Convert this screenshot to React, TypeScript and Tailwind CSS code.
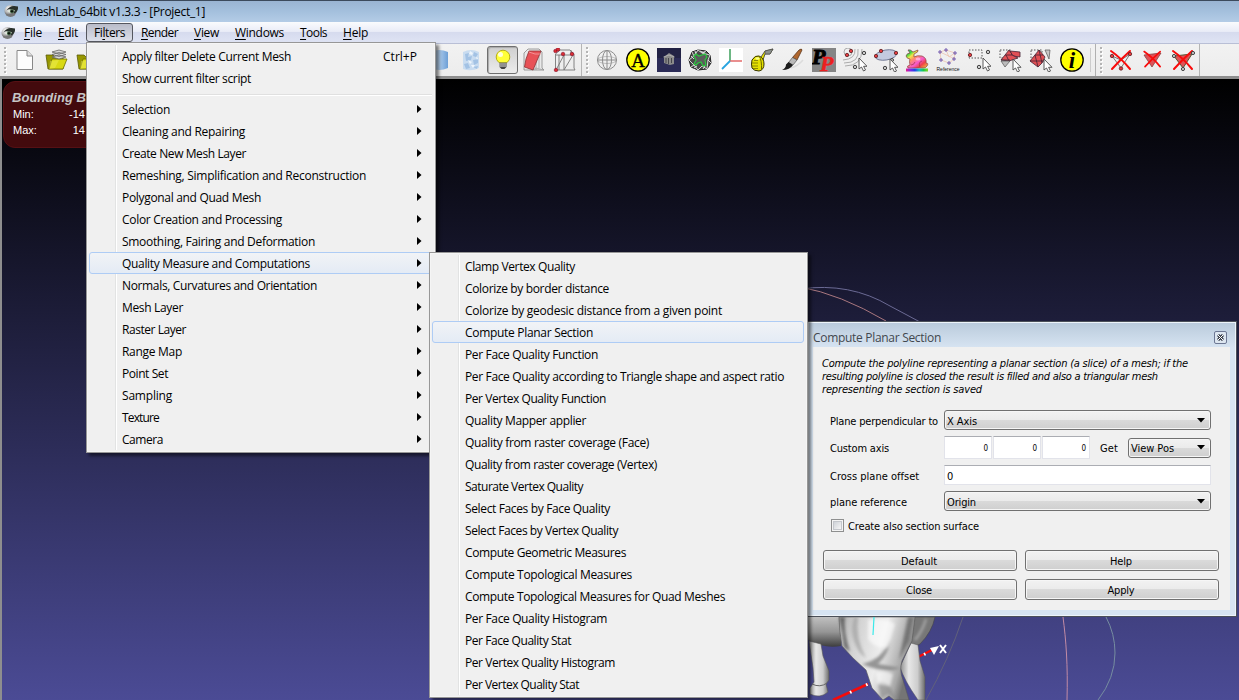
import { useLayoutEffect, useRef, useState, type ReactNode } from 'react';

/** Text set to a given line width by tracking. */
function Fit({ w, children }: { w: number; children: ReactNode }) {
  const ref = useRef<HTMLSpanElement>(null);
  const [ls, setLs] = useState(0);
  useLayoutEffect(() => {
    const el = ref.current;
    if (!el) return;
    const n = el.textContent?.length || 1;
    setLs((w - el.getBoundingClientRect().width) / n);
  }, [w]);
  return (
    <span ref={ref} className="inline-block shrink-0 whitespace-pre" style={{ letterSpacing: ls }}>
      {children}
    </span>
  );
}

const filters: [string, number][] = [
  ['Selection', 48],
  ['Cleaning and Repairing', 123],
  ['Create New Mesh Layer', 124],
  ['Remeshing, Simplification and Reconstruction', 244],
  ['Polygonal and Quad Mesh', 139],
  ['Color Creation and Processing', 160],
  ['Smoothing, Fairing and Deformation', 193],
  ['Quality Measure and Computations', 188],
  ['Normals, Curvatures and Orientation', 195],
  ['Mesh Layer', 61],
  ['Raster Layer', 64],
  ['Range Map', 60],
  ['Point Set', 46],
  ['Sampling', 50],
  ['Texture', 37],
  ['Camera', 41],
];

const quality: [string, number][] = [
  ['Clamp Vertex Quality', 110],
  ['Colorize by border distance', 144],
  ['Colorize by geodesic distance from a given point', 257],
  ['Compute Planar Section', 128],
  ['Per Face Quality Function', 133],
  ['Per Face Quality according to Triangle shape and aspect ratio', 319],
  ['Per Vertex Quality Function', 141],
  ['Quality Mapper applier', 121],
  ['Quality from raster coverage (Face)', 184],
  ['Quality from raster coverage (Vertex)', 192],
  ['Saturate Vertex Quality', 118],
  ['Select Faces by Face Quality', 145],
  ['Select Faces by Vertex Quality', 153],
  ['Compute Geometric Measures', 161],
  ['Compute Topological Measures', 167],
  ['Compute Topological Measures for Quad Meshes', 260],
  ['Per Face Quality Histogram', 142],
  ['Per Face Quality Stat', 106],
  ['Per Vertex Quality Histogram', 150],
  ['Per Vertex Quality Stat', 114],
];

const HOT =
  'rounded-[3px] border border-[#aeccf5] bg-[linear-gradient(#f1f3f6,#e4ebf5)]';

function Item({ label, w, arrow, hot, keys }: { label: string; w: number; arrow?: boolean; hot?: boolean; keys?: string }) {
  return (
    <div className={'relative flex h-[22px] shrink-0 items-center justify-between ' + (hot ? HOT + ' pl-[32px] pr-[9px]' : 'pl-[33px] pr-[10px]')}>
      <span className="pt-[2px]">
        <Fit w={w}>{label}</Fit>
      </span>
      {keys && (
        <span className="pr-[5px] pt-[2px]">
          <Fit w={34}>{keys}</Fit>
        </span>
      )}
      {arrow && (
        <svg width="5" height="8" viewBox="0 0 5 8" className="mb-[1px]">
          <path d="M0 0 L4.5 4 L0 8Z" fill="#000" />
        </svg>
      )}
    </div>
  );
}

function Eye() {
  return (
    <svg width="15" height="15" viewBox="0 0 15 15">
      <defs>
        <radialGradient id="eye" cx=".35" cy=".3">
          <stop offset="0" stopColor="#fff" />
          <stop offset=".7" stopColor="#b5b5b5" />
          <stop offset="1" stopColor="#777" />
        </radialGradient>
      </defs>
      <ellipse cx="6.500" cy="8" rx="6" ry="6" fill="url(#eye)" />
      <path d="M2.500 7.500Q6 1.500 14 3.500Q14.500 8 10.500 10.500L9 8Q6 5 2.500 7.500Z" fill="#29302b" />
      <path d="M3.500 8.500Q7 5 11 7.500Q9 11.500 3.500 8.500Z" fill="#dbe5d8" />
      <circle cx="8" cy="8.200" r="2" fill="#38573a" />
      <circle cx="8" cy="8.200" r=".9" fill="#000" />
    </svg>
  );
}

function Ico({ children, on }: { children: ReactNode; on?: boolean }) {
  return (
    <div className={'flex h-[28px] w-[31px] shrink-0 items-center justify-center ' + (on ? 'rounded-[3px] border border-[#6f6f6f] bg-[linear-gradient(#cfcfcf,#ececec)] shadow-[inset_1px_1px_1px_#a8a8a8]' : '')}>
      <svg width="24" height="24" viewBox="0 0 24 24" className="shrink-0">
        {children}
      </svg>
    </div>
  );
}

const Handle = () => (
  <svg width="3" height="28" className="shrink-0">
    {[1, 5, 9, 13, 17, 21, 25].map((y) => (
      <g key={y}>
        <rect x="1" y={y + 1} width="2" height="2" fill="#fff" />
        <rect x="0" y={y} width="2" height="2" fill="#b4b4b4" />
      </g>
    ))}
  </svg>
);

const Cursor = ({ x, y }: { x: number; y: number }) => (
  <path transform={`translate(${x} ${y})`} d="M0 0V11L2.5 9L4.5 13L6.5 12L4.6 8.3H8Z" fill="#fff" stroke="#4a4a4a" strokeWidth=".9" />
);

function Folder() {
  return (
    <>
      <path d="M2 7H9L11 9H19V21H4Z" fill="#979700" stroke="#5c5c08" strokeWidth=".8" />
      <path d="M5 21L8 11H23L19 21Z" fill="#d9d913" stroke="#6d6d00" strokeWidth=".8" />
      <path d="M6 13L15 12L11 20L5 21Z" fill="#f3f36a" opacity=".4" />
    </>
  );
}

const RED_DOT = { fill: '#e33b3f', stroke: '#5c2022', strokeWidth: 0.8 };
const GRY_DOT = { fill: '#ccc', stroke: '#444', strokeWidth: 1 };

function Cross() {
  return <path d="M2 3Q12 10 21 21M21 3Q12 11 3 21" stroke="#f90b0b" strokeWidth="2" fill="none" strokeLinecap="round" />;
}

function TitleBar() {
  return (
    <div className="flex h-[22px] items-center border-t border-[#3c4a5c] bg-[linear-gradient(#9ab4d2,#a4c0dd_50%,#b4cce6)] pl-[4px] text-[12px] text-black">
      <span className="-mt-[3px]">
        <Eye />
      </span>
      <span className="pl-[7px]">
        <Fit w={179}>MeshLab_64bit v1.3.3 - [Project_1]</Fit>
      </span>
    </div>
  );
}

const menus: [string, string, string, number][] = [
  ['', 'F', 'ile', 18],
  ['', 'E', 'dit', 20],
  ['Fi', 'l', 'ters', 31],
  ['', 'R', 'ender', 37],
  ['', 'V', 'iew', 25],
  ['', 'W', 'indows', 49],
  ['', 'T', 'ools', 27],
  ['', 'H', 'elp', 25],
];

function MenuBar() {
  return (
    <div className="flex h-[21px] items-center bg-[linear-gradient(#fafbfd,#e9ecf7_45%,#d6dbee_50%,#dfe4f4)]">
      <div className="w-[16px] pl-px">
        <Eye />
      </div>
      {menus.map(([a, u, b, w]) => (
        <div
          key={b}
          className={
            'flex h-[19px] items-center px-[7px] pt-px border ' +
            (a ? 'rounded-[3px] border-[#55575f] bg-[linear-gradient(#b9bcc9,#dde0ea)]' : 'border-transparent')
          }
        >
          <Fit w={w}>
            {a}
            <span className="underline underline-offset-2">{u}</span>
            {b}
          </Fit>
        </div>
      ))}
    </div>
  );
}

function ToolBar() {
  return (
    <div className="flex h-[36px] items-center border-t border-b-[3px] border-t-[#b9bfd6] border-b-[#8e8e8e] bg-[linear-gradient(#f2f2f2,#ececec)]">
      <div className="w-[9px] shrink-0 pl-[4px]">
        <Handle />
      </div>
      <Ico>
        <path d="M4 2.500H14L19.500 8V21.500H4Z" fill="#fdfdfd" stroke="#888" />
        <path d="M14 2.500V8H19.500" fill="#ddd" stroke="#888" />
      </Ico>
      <Ico>
        <Folder />
        <path d="M8 4L15 2L22 4L15 6ZM8 6.500L15 4.500L22 6.500L15 8.500ZM8 9L15 7L22 9L15 11Z" fill="#d9d9d9" stroke="#666" strokeWidth=".8" />
      </Ico>
      <Ico>
        <Folder />
      </Ico>
      <div className="w-[323px] shrink-0" />
      <Ico>
        <defs>
          <linearGradient id="cyl">
            <stop offset="0" stopColor="#e8f4ff" />
            <stop offset="1" stopColor="#6d9fd6" />
          </linearGradient>
        </defs>
        <path d="M2 4Q10 0 19 4V20Q10 24 2 20Z" fill="url(#cyl)" />
      </Ico>
      <Ico>
        <path d="M3 4Q11 0 19 4V20Q11 24 3 21Z" fill="#c9dcf0" />
        <path d="M5 6L9 5L8 9L12 8L11 12L6 13ZM14 4L18 6L16 9L13 8ZM13 12L18 11L18 15L14 17ZM4 16L8 15L10 20L6 21ZM13 19L18 18L17 21Z" fill="#a3c2e4" />
        <path d="M10 3L13 5L12 7L9 6ZM16 9L18 10L17 12ZM8 12L12 14L10 16ZM11 17L15 17L13 20Z" fill="#eef5fc" />
      </Ico>
      <Ico on>
        <circle cx="12" cy="9" r="6.800" fill="#ffff38" stroke="#a8a000" strokeWidth=".8" />
        <circle cx="9.500" cy="6.500" r="2.500" fill="#ffffd8" />
        <path d="M8.500 14.500H15.500V19L13.500 21H10.500L8.500 19Z" fill="#444" />
        <path d="M8.500 16H15M8.500 18H15" stroke="#ddd" />
      </Ico>
      <Ico>
        <path d="M2 5L6 1H17L20 4V20L22 22H2Z" fill="#e9e9e9" stroke="#888" strokeWidth=".8" />
        <path d="M14 8V22M11 22L14 20L22 22M17 4V20" stroke="#999" strokeWidth=".7" fill="none" />
        <path d="M7 3H19L11 22L2.500 19L4 11Z" fill="#e85257" stroke="#8f3033" strokeWidth=".8" />
        <path d="M7 4L13 6H19" stroke="#f4a3a5" strokeWidth=".8" fill="none" />
      </Ico>
      <Ico>
        <path d="M2.500 6L7 2H17L21 6V20L22 22H2.500ZM3 7H21M3 22L11 7V22L20 7M18 2V7M6 7V22" fill="none" stroke="#777" strokeWidth=".9" />
        {[[2.5, 3], [5, 1.5], [10, 6], [19, 6], [3, 22]].map(([x, y]) => (
          <circle key={x + '-' + y} cx={x} cy={y} r="1.800" fill="#d92c31" stroke="#702" strokeWidth=".5" />
        ))}
      </Ico>
      <div className="mx-px h-full w-px shrink-0 bg-[#b5b5b5]" />
      <div className="w-[8px] shrink-0 pl-[3px]">
        <Handle />
      </div>
      <Ico>
        <g fill="none" stroke="#8c8c8c">
          <circle cx="12" cy="12" r="9.500" />
          <ellipse cx="12" cy="12" rx="4.500" ry="9.500" />
          <path d="M2.500 12H21.500M12 2.500V21.500" />
          <ellipse cx="12" cy="12" rx="9.500" ry="3.500" strokeWidth=".5" />
        </g>
      </Ico>
      <Ico>
        <circle cx="12" cy="12" r="11.200" fill="#ffff00" stroke="#000" strokeWidth="1.300" />
        <text x="12" y="18.500" textAnchor="middle" fontFamily="Liberation Serif, serif" fontSize="19" fill="#000" stroke="#000" strokeWidth=".4">A</text>
      </Ico>
      <Ico>
        <rect width="24" height="24" fill="#2b2b56" />
        <rect width="24" height="10" fill="#1c1c38" opacity=".6" />
        <path d="M7 9L12 5L17 8V16L13 17L7 15Z" fill="#8a8a8a" />
        <path d="M9 10V15M11.500 10V16M14.500 10V15" stroke="#46464c" />
        <path d="M6.500 9L12 7L17.500 9" stroke="#b4b4b4" fill="none" strokeWidth=".9" />
      </Ico>
      <Ico>
        <path d="M4 4L10 2L18 3L22 7L23 15L19 21L10 22L3 19L1 12Z" fill="#4a4a4a" stroke="#222" />
        <path d="M1 12L6 8L10 2L14 5L22 7L20 12L23 15M3 19L6 17L10 22L14 18L19 21M4 4L6 8M1 12L6 17M18 3L14 5M20 12L19 21M7 3L8 6M12 3L17 5M3 8L6 11M6 20L9 18M15 21L17 18" stroke="#e6e6e6" strokeWidth=".9" fill="none" />
        <path d="M6 8L8 6L11 8L17 6L19 9L17 12L18 17L15 18L13 14L10 15L8 17L6 16L8 12Z" fill="#5c5c5c" stroke="#2cc93f" strokeWidth="1.200" />
      </Ico>
      <Ico>
        <rect width="24" height="24" fill="#fff" />
        <path d="M11 1V13" stroke="#3c9f5b" strokeWidth="1.500" />
        <path d="M11 13H23" stroke="#e36a6a" strokeWidth="1.500" />
        <path d="M11 13L3 21" stroke="#27a4e0" strokeWidth="1.800" />
      </Ico>
      <Ico>
        <path d="M11 9L15 3L23 1L20 6L15 6L13 12Z" fill="#e8e400" stroke="#333" strokeWidth=".8" />
        <path d="M15 3L23 1L20 6L15 6Z" fill="#8c918e" stroke="#444" strokeWidth=".6" />
        <path d="M2 12Q5 7 9 8Q14 10 14 16Q14 22 9 23Q4 23 2 20Q1 16 2 12Z" fill="#e5e000" stroke="#343200" />
        <path d="M9 8Q12 12 11.500 22" stroke="#6b6800" fill="none" />
        <path d="M2 15H8M2 18H8M3 20.500H8M4 12.500H8" stroke="#777300" strokeWidth=".8" />
        <ellipse cx="7.500" cy="10.500" rx="2" ry="1.200" fill="#fbff8a" />
      </Ico>
      <Ico>
        <path d="M10 20Q17 18 22 12" stroke="#dcdcdc" strokeWidth="1.500" fill="none" />
        <path d="M18 2Q21 0 21 2L16 12L11.500 9.500Z" fill="#b0672e" stroke="#5c3519" strokeWidth=".8" />
        <path d="M11.500 9.500L16 12L12 17L7.500 14.500Z" fill="#b9b9b9" stroke="#555" strokeWidth=".7" />
        <path d="M7.500 14L12 17Q9 22 1 22Q5 20 5 16.500Z" fill="#1b1b1b" />
      </Ico>
      <Ico>
        <rect width="24" height="24" fill="#858585" />
        <text x="0" y="16" fontFamily="Liberation Serif, serif" fontWeight="bold" fontStyle="italic" fontSize="22" fill="#000" stroke="#000">P</text>
        <text x="8" y="23" fontFamily="Liberation Serif, serif" fontWeight="bold" fontStyle="italic" fontSize="22" fill="#ec1f1f" stroke="#ec1f1f" strokeWidth=".5">P</text>
      </Ico>
      <Ico>
        <g fill="none" stroke="#9a9a9a" strokeWidth=".8">
          <circle cx="5" cy="4" r="4" />
          <path d="M12 1Q13 11 0 12M15 1Q17 15 1 15M19 1Q19 18 2 18" />
        </g>
        <circle cx="4" cy="7" r="1.700" {...RED_DOT} />
        <circle cx="8" cy="3" r="1.700" {...RED_DOT} />
        <circle cx="21" cy="5" r="1.700" {...GRY_DOT} />
        <circle cx="12" cy="19" r="1.700" {...GRY_DOT} />
        <Cursor x={16} y={10} />
      </Ico>
      <Ico>
        <ellipse cx="12" cy="7" rx="11" ry="5" transform="rotate(-10 12 7)" fill="#c3cadf" stroke="#606886" strokeWidth=".8" />
        <circle cx="2" cy="8" r="1.700" {...RED_DOT} />
        <circle cx="7" cy="3" r="1.700" {...RED_DOT} />
        <circle cx="22" cy="5" r="1.700" {...RED_DOT} />
        <circle cx="18" cy="12" r="1.500" {...GRY_DOT} />
        <circle cx="11" cy="20" r="1.700" {...GRY_DOT} />
        <Cursor x={16} y={11} />
      </Ico>
      <Ico>
        <defs>
          <linearGradient id="rb" gradientUnits="userSpaceOnUse" x1="5" y1="1" x2="21" y2="21">
            <stop offset="0" stopColor="#17c9a0" />
            <stop offset=".12" stopColor="#3fdc42" />
            <stop offset=".24" stopColor="#f0e64a" />
            <stop offset=".38" stopColor="#ff8c6a" />
            <stop offset=".6" stopColor="#f55bcc" />
            <stop offset=".76" stopColor="#ef3f4a" />
            <stop offset="1" stopColor="#ead23a" />
          </linearGradient>
          <linearGradient id="spec">
            <stop offset="0" stopColor="#e81c8c" />
            <stop offset=".2" stopColor="#7a28e8" />
            <stop offset=".4" stopColor="#2040e8" />
            <stop offset=".6" stopColor="#18b8c8" />
            <stop offset=".8" stopColor="#18c848" />
            <stop offset="1" stopColor="#88d820" />
          </linearGradient>
        </defs>
        <path d="M1 8Q2 5 5 5L3 2Q5 1 8 4L13 2Q14 4 9 6L9 9Q12 7 17 8Q22 10 21 15Q24 15 22 18Q21 20 18 20H3Q1 18 5 17Q4 13 5 11Q2 11 1 8Z" fill="url(#rb)" stroke="#8a4040" strokeWidth=".7" />
        <path d="M15 19Q13 14 17 13M6 17Q9 17 10 14" stroke="#a02c50" strokeWidth=".7" fill="none" />
        <ellipse cx="13" cy="11" rx="2.500" ry="1.500" fill="#ffc8f0" opacity=".7" />
        <rect x="1" y="20.500" width="22" height="3" fill="url(#spec)" />
      </Ico>
      <Ico>
        <path d="M4 4L10 2L19 5L18 11L13 15L5 12ZM4 4L19 11M10 2L13 9L19 5" stroke="#edc4ae" strokeWidth=".8" fill="none" />
        {[[4, 4], [10, 2], [19, 5], [18, 11], [13, 15], [5, 12]].map(([x, y]) => (
          <path key={x} d={`M${x - 2} ${y}h4M${x} ${y - 2}v4`} stroke="#7058b0" />
        ))}
        <text x="12" y="23" textAnchor="middle" fontFamily="Liberation Sans, sans-serif" fontSize="5" fill="#111" textLength="23">Reference</text>
      </Ico>
      <Ico>
        <path d="M2 2H15V10H2Z" fill="none" stroke="#555" strokeDasharray="1.500 1.500" />
        <circle cx="3" cy="7" r="1.700" {...RED_DOT} />
        <circle cx="21" cy="4" r="1.700" {...GRY_DOT} />
        <circle cx="12" cy="19" r="1.700" {...GRY_DOT} />
        <Cursor x={16} y={10} />
      </Ico>
      <Ico>
        <path d="M2 2H13V10H2Z" fill="none" stroke="#555" strokeDasharray="1.500 1.500" />
        <path d="M3 12L11 2L14 6L11 13Z" fill="#e15055" stroke="#423" strokeWidth=".8" />
        <path d="M12 3L22 4V9L15 8Z" fill="#e15055" stroke="#423" strokeWidth=".8" />
        <path d="M3 12H12M7 7H14L20 10L11 13L8 7" stroke="#423" strokeWidth=".8" fill="#e15055" />
        <path d="M3 13L7 19L12 13Z" fill="#bbb" stroke="#555" strokeWidth=".7" />
        <Cursor x={15} y={11} />
      </Ico>
      <Ico>
        <path d="M2 2H13V10H2Z" fill="none" stroke="#555" strokeDasharray="1.500 1.500" />
        <path d="M1 13L10 2L16 9L13 15L9 19Z" fill="#e15055" stroke="#423" strokeWidth=".8" />
        <path d="M1 13H15M6 7L14 7M10 2L13 15M9 19L6 7" stroke="#423" strokeWidth=".8" fill="none" />
        <path d="M16 2H21L20 11Z" fill="#c8c8c8" stroke="#555" strokeWidth=".7" />
        <Cursor x={15} y={11} />
      </Ico>
      <Ico>
        <circle cx="12" cy="12" r="11.200" fill="#ffff00" stroke="#000" strokeWidth="1.300" />
        <text x="12" y="19.500" textAnchor="middle" fontFamily="Liberation Serif, serif" fontWeight="bold" fontStyle="italic" fontSize="23" fill="#000">i</text>
      </Ico>
      <div className="ml-[3px] h-[24px] w-px shrink-0 bg-[#cccccc]" />
      <div className="ml-[4px] h-full w-px shrink-0 bg-[#b0b0b0]" />
      <div className="w-[9px] shrink-0 pl-[4px]">
        <Handle />
      </div>
      <Ico>
        <path d="M3 8L12 20L21 6M3 8L12 12L21 6" fill="none" stroke="#777" />
        <Cross />
        <circle cx="3" cy="8" r="1.700" {...RED_DOT} />
        <circle cx="21" cy="6" r="1.700" {...RED_DOT} />
        <circle cx="12" cy="20.500" r="1.700" {...RED_DOT} />
      </Ico>
      <Ico>
        <path d="M4 7L21 5L12 19Z" fill="#df5257" stroke="#844" strokeWidth=".8" />
        <g transform="translate(2.500 1) scale(.84)">
          <Cross />
        </g>
      </Ico>
      <Ico>
        <path d="M3 8L21 6L12 20Z" fill="#df5257" stroke="#553" />
        <Cross />
        <circle cx="3" cy="8" r="1.600" {...GRY_DOT} />
        <circle cx="22" cy="5" r="1.600" {...GRY_DOT} />
        <circle cx="12" cy="21" r="1.600" {...GRY_DOT} />
      </Ico>
      <div className="ml-px h-full w-px shrink-0 bg-[#b5b5b5]" />
    </div>
  );
}

function Scene() {
  return (
    <svg className="absolute left-[800px] top-[200px]" width="439" height="421" viewBox="800 279 439 421">
      <defs>
        <linearGradient id="body" x1="0" y1="0" x2="1" y2=".3">
          <stop offset="0" stopColor="#adadad" />
          <stop offset=".25" stopColor="#d2d2d2" />
          <stop offset=".6" stopColor="#ececec" />
          <stop offset=".9" stopColor="#a8a8a8" />
          <stop offset="1" stopColor="#757575" />
        </linearGradient>
        <linearGradient id="belly" x1="0" y1="0" x2="0" y2="1">
          <stop offset="0" stopColor="#c0c0c0" />
          <stop offset=".5" stopColor="#969696" />
          <stop offset="1" stopColor="#3d3d3d" />
        </linearGradient>
        <linearGradient id="leg">
          <stop offset="0" stopColor="#8c8c8c" />
          <stop offset=".35" stopColor="#e8e8e8" />
          <stop offset=".7" stopColor="#cdcdcd" />
          <stop offset="1" stopColor="#6c6c6c" />
        </linearGradient>
        <filter id="soft"><feGaussianBlur stdDeviation="1.500" /></filter>
      </defs>
      <path d="M800 289Q850 282 890 306Q907 315 920 322" fill="none" stroke="#6b6a94" />
      <path d="M800 287Q840 294 886 321" fill="none" stroke="#a9777f" />
      <path d="M963 617Q949 659 926 700" fill="none" stroke="#61617b" />
      <path d="M1063 617C1066 640 1068 665 1067 700" fill="none" stroke="#c28ba5" />
      <path d="M1106 617Q1115 634 1115 653Q1115 678 1098 700" fill="none" stroke="#768da0" />
      <path d="M833 700L868 684M918 657L932 650" stroke="#f60b0b" strokeWidth="2.500" />
      <path d="M850 692.500l1.500-.7M866 685l1.500-.7M924 654.500l1.500-.7" stroke="#fff" strokeWidth="3" />
      <path d="M930 648L939 646L934 655Z" fill="#fff" />
      <path d="M940 645L946 653M946 645L940 653" stroke="#fff" strokeWidth="2" />
      <path d="M914 617H935Q932 632 920 644Q911 650 909 638Z" fill="#777" stroke="#444" strokeWidth=".6" />
      <path d="M911 643L918 645L920 661L925 677V700H918Q904 680 900 667Z" fill="url(#leg)" stroke="#555" strokeWidth=".5" />
      <path d="M808 617H841V646Q824 649 808 640Z" fill="url(#belly)" />
      <path d="M809 641L821 644L823 656L829 671V680L826 684L828 692Q820 699 810 694L810 688L814 682L813 668Z" fill="url(#leg)" stroke="#555" strokeWidth=".6" />
      <path d="M812 684Q820 688 827 683" fill="none" stroke="#666" />
      <path d="M839 617H915L912 641L902 661Q899 670 903 680L909 700H894L889 696L883 700L872 688L866 670L853 658L842 646Q839 630 839 617Z" fill="url(#body)" stroke="#595959" strokeWidth=".6" />
      <g filter="url(#soft)">
        <path d="M839 617Q843 632 844 647L850 652Q843 631 845 617Z" fill="#555" opacity=".8" />
        <path d="M854 617Q848 637 861 654L866 658Q855 638 858 617Z" fill="#999" opacity=".6" />
        <path d="M862 664Q883 659 890 640Q889 654 878 664L900 668Q885 674 862 664Z" fill="#808080" opacity=".8" />
        <path d="M914 617L909 641L899 660L903 641L908 617Z" fill="#5c5c5c" opacity=".7" />
        <path d="M878 683Q888 676 896 700L888 694L881 699Z" fill="#888" opacity=".6" />
        <path d="M868 620Q884 617 895 624L888 647Q876 650 868 639Z" fill="#fff" opacity=".6" />
        <path d="M876 672Q885 670 893 674L890 686Q882 684 877 684Z" fill="#fff" opacity=".6" />
        <path d="M926 619Q922 632 915 640" stroke="#b0b0b0" strokeWidth="2" fill="none" />
      </g>
      <path d="M874 617L873 635" stroke="#39eaea" strokeWidth="1.200" />
    </svg>
  );
}

const Arrow = () => (
  <svg width="8" height="5" viewBox="0 0 8 5" className="shrink-0">
    <path d="M0 0H8L4 4.500Z" fill="#000" />
  </svg>
);

const FACE = 'rounded-[3px] border border-[#707070] bg-[linear-gradient(#f2f2f2,#ebebeb_48%,#dadada_50%,#cfcfcf)] shadow-[inset_0_0_0_1px_#f6f6f6]';

function Combo({ label, w, small }: { label: string; w: number; small?: boolean }) {
  return (
    <div className={'flex h-[20px] items-center justify-between pl-[2px] pr-[5px] ' + FACE + (small ? ' w-[83px]' : ' w-[267px]')}>
      <span className="pt-[2px]"><Fit w={w}>{label}</Fit></span>
      <Arrow />
    </div>
  );
}

const FIELD = 'border border-[#e2e3ea] border-t-[#abadb3] bg-white';

function Row({ label, w, children, className }: { label: string; w: number; children: ReactNode; className: string }) {
  return (
    <div className={'flex items-center pl-[17px] ' + className}>
      <div className="w-[114px] shrink-0 pt-[2px]">
        <Fit w={w}>{label}</Fit>
      </div>
      {children}
    </div>
  );
}

function PushButton({ label, w }: { label: string; w: number }) {
  return (
    <div className={'flex h-[21px] items-center justify-center pr-[2px] pt-px ' + FACE}>
      <Fit w={w}>{label}</Fit>
    </div>
  );
}

function Dialog() {
  return (
    <div className="absolute left-[807px] top-[321px] flex h-[296px] w-[430px] flex-col border border-[#4b5059] bg-[#d7e4f2] pb-[6px] pl-[5px] pr-[6px] shadow-[inset_0_0_0_1px_#eef4fa] bg-[linear-gradient(#b9cadb,#d7e4f2_26px)]">
      <div className="flex h-[25px] shrink-0 items-center justify-between pr-[3px] pt-[6px] font-['Open_Sans',sans-serif] text-[12px] text-[#42474e]">
        <Fit w={128}>Compute Planar Section</Fit>
        <div className="flex size-[13px] items-center justify-center rounded-[2px] border border-[#6d7894] bg-[#dde6f0]">
          <svg width="7" height="7" viewBox="0 0 7 7">
            <path d="M1 1L6 6M6 1L1 6" stroke="#353b46" strokeWidth="3" />
            <path d="M1 1L6 6M6 1L1 6" stroke="#fff" strokeWidth="1" />
          </svg>
        </div>
      </div>
      <div className="flex flex-1 flex-col bg-[#f0f0f0] font-['DejaVu_Sans_Condensed','DejaVu_Sans',sans-serif] text-[11px] leading-[13px] text-black">
        <div className="flex flex-col items-start pl-[9px] pt-[10px] italic">
          <Fit w={366}>Compute the polyline representing a planar section (a slice) of a mesh; if the</Fit>
          <Fit w={336}>resulting polyline is closed the result is filled and also a triangular mesh</Fit>
          <Fit w={160}>representing the section is saved</Fit>
        </div>
        <Row label="Plane perpendicular to" w={108} className="mt-[14px] h-[20px]">
          <Combo label="X Axis" w={30} />
        </Row>
        <Row label="Custom axis" w={59} className="mt-[6px] h-[23px]">
          <div className="flex gap-px">
            {[0, 1, 2].map((i) => (
              <div key={i} className={'flex h-[23px] w-[48px] items-center justify-end pr-[3px] pt-[2px] text-[8px] ' + FIELD}>0</div>
            ))}
          </div>
          <div className="w-[38px] pl-[10px] pt-[2px]">
            <Fit w={18}>Get</Fit>
          </div>
          <Combo label="View Pos" w={43} small />
        </Row>
        <Row label="Cross plane offset" w={89} className="mt-[6px] h-[20px]">
          <div className={'flex h-[20px] w-[267px] items-center pl-[2px] pt-[2px] ' + FIELD}>0</div>
        </Row>
        <Row label="plane reference" w={77} className="mt-[6px] h-[20px]">
          <Combo label="Origin" w={29} />
        </Row>
        <div className="mt-[8px] flex h-[13px] items-center gap-[4px] pl-[18px]">
          <div className="size-[13px] border border-[#8e8f8f] bg-[#f4f4f4] p-px">
            <div className="size-full border border-[#c4c7cc] bg-[linear-gradient(135deg,#cfd3d8,#f6f6f6)]" />
          </div>
          <span className="pt-px"><Fit w={131}>Create also section surface</Fit></span>
        </div>
        <div className="ml-[10px] mt-[18px] grid w-[396px] grid-cols-2 gap-[8px]">
          <PushButton label="Default" w={36} />
          <PushButton label="Help" w={22} />
          <PushButton label="Close" w={26} />
          <PushButton label="Apply" w={27} />
        </div>
      </div>
    </div>
  );
}

const PANEL =
  'absolute flex flex-col border border-[#979797] bg-[#f0f0f0] py-[2px] pl-[2px] pr-[3px] shadow-[3px_3px_3px_rgba(0,0,0,0.5),inset_0_0_0_1px_#f5f5f5]';

export default function App() {
  return (
    <div className="relative flex h-[700px] w-[1239px] flex-col overflow-hidden bg-[#f0f0f0] font-['Open_Sans','Noto_Sans',sans-serif] text-[12px] leading-[16px] text-black">
      <TitleBar />
      <MenuBar />
      <ToolBar />
      <div className="relative flex-1 overflow-hidden border-l-2 border-[#8e8e8e] bg-[linear-gradient(#000,#4b4b95)]">
        <div className="absolute left-px top-[2px] h-[67px] w-[200px] rounded-[12px] border border-[#561014] bg-[#430a0d] pl-[8px] pt-[8px] font-['Liberation_Sans',sans-serif] text-[11px] text-white">
          <div className="text-[13px] font-bold italic leading-[16px] text-[#c6c6c6]">
            <Fit w={74}>Bounding B</Fit>
          </div>
          <div className="flex w-[73px] justify-between pl-px"><span>Min:</span><span>-14</span></div>
          <div className="flex w-[73px] justify-between pl-px"><span>Max:</span><span>14</span></div>
        </div>
        <div className="absolute -left-[2px] top-0">
          <Scene />
        </div>
      </div>
      <Dialog />
      <div className={PANEL + ' left-[86px] top-[42px] h-[411px] w-[350px]'}>
        <div className="absolute bottom-[2px] left-[28px] top-[2px] w-[2px] border-l border-[#e2e3e3] bg-white" />
        <Item label="Apply filter Delete Current Mesh" w={169} keys="Ctrl+P" />
        <Item label="Show current filter script" w={129} />
        <div className="flex h-[9px] shrink-0 items-center pl-[28px] pt-[3px]">
          <div className="h-[2px] w-full border-t border-[#e0e0e0] bg-white" />
        </div>
        {filters.map(([l, w]) => (
          <Item key={l} label={l} w={w} arrow hot={l.startsWith('Quality')} />
        ))}
      </div>
      <div className={PANEL + ' left-[429px] top-[252px] h-[446px] w-[379px]'}>
        <div className="absolute bottom-[2px] left-[28px] top-[2px] w-[2px] border-l border-[#e2e3e3] bg-white" />
        {quality.map(([l, w]) => (
          <Item key={l} label={l} w={w} hot={l === 'Compute Planar Section'} />
        ))}
      </div>
    </div>
  );
}
